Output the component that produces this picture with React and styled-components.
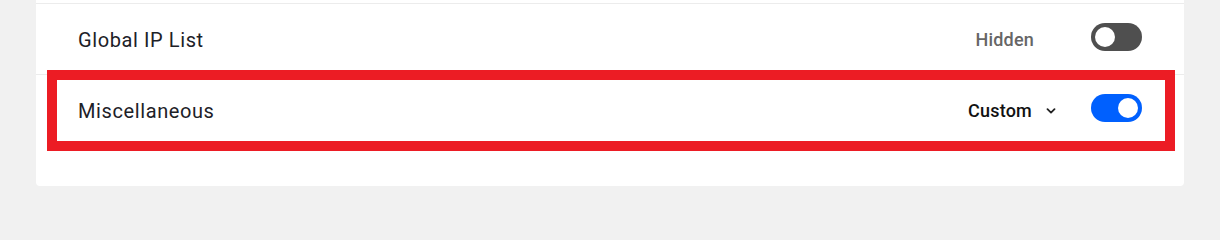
import React, { useState } from "react";
import styled, { createGlobalStyle } from "styled-components";

const GlobalStyle = createGlobalStyle`
  html, body {
    margin: 0;
    background: #f1f1f1;
    font-family: Roboto, "Liberation Sans", sans-serif;
  }
`;

const Page = styled.div`
  padding: 0 36px;
`;

const Card = styled.div`
  background: #fff;
  border-radius: 0 0 4px 4px;
  padding: 3px 0 41px;
`;

const Row = styled.div`
  position: relative;
  display: flex;
  align-items: center;
  box-sizing: border-box;
  height: 71px;
  padding: 0 42px 4px;
  border-top: 1px solid #ececec;
`;

const Name = styled.span`
  flex: 1;
  padding-top: 5px;
  font-size: 20px;
  letter-spacing: 0.6px;
  color: #1d2127;
`;

const Status = styled.div`
  display: flex;
  align-items: center;
  gap: 14px;
  margin-right: 35px;
`;

const StatusText = styled.span`
  padding-top: 4px;
  font-size: 18px;
  font-weight: 500;
  letter-spacing: 0.2px;
  margin-right: ${(p) => (p.$muted ? "-2px" : "0")};
  color: ${(p) => (p.$muted ? "#666" : "#111")};
`;

const Chevron = styled.span`
  display: flex;
  width: 10px;
  justify-content: center;
  padding-top: 5px;
  visibility: ${(p) => (p.$hidden ? "hidden" : "visible")};
`;

const Toggle = styled.button`
  position: relative;
  width: 51px;
  height: 28px;
  border: none;
  padding: 0;
  border-radius: 14px;
  background: ${(p) => (p.$on ? "#0060fe" : "#4f4f4f")};
  cursor: pointer;

  &::after {
    content: "";
    position: absolute;
    top: 4px;
    left: ${(p) => (p.$on ? "27px" : "4px")};
    width: 20px;
    height: 20px;
    border-radius: 50%;
    background: #fff;
  }
`;

const Highlight = styled.div`
  position: absolute;
  top: -5px;
  left: 11px;
  right: 9px;
  bottom: -6px;
  border: 10px solid #ec1c24;
  pointer-events: none;
`;

const ChevronIcon = () => (
  <svg width="10" height="6" viewBox="0 0 10 6" fill="none">
    <path d="M1.5 1.2L5 4.6L8.5 1.2" stroke="#222" strokeWidth="1.8" strokeLinecap="round" strokeLinejoin="round" />
  </svg>
);

const rows = [
  { name: "Global IP List", status: "Hidden", muted: true, menu: false, on: false },
  { name: "Miscellaneous", status: "Custom", muted: false, menu: true, on: true, highlight: true },
];

export default function App() {
  const [state, setState] = useState(rows.map((r) => r.on));

  return (
    <>
      <GlobalStyle />
      <Page>
        <Card>
          {rows.map((r, i) => (
            <Row key={r.name}>
              <Name>{r.name}</Name>
              <Status>
                <StatusText $muted={r.muted}>{r.status}</StatusText>
                <Chevron $hidden={!r.menu}>
                  <ChevronIcon />
                </Chevron>
              </Status>
              <Toggle
                $on={state[i]}
                aria-label={r.name}
                onClick={() => setState(state.map((v, j) => (j === i ? !v : v)))}
              />
              {r.highlight && <Highlight />}
            </Row>
          ))}
        </Card>
      </Page>
    </>
  );
}
